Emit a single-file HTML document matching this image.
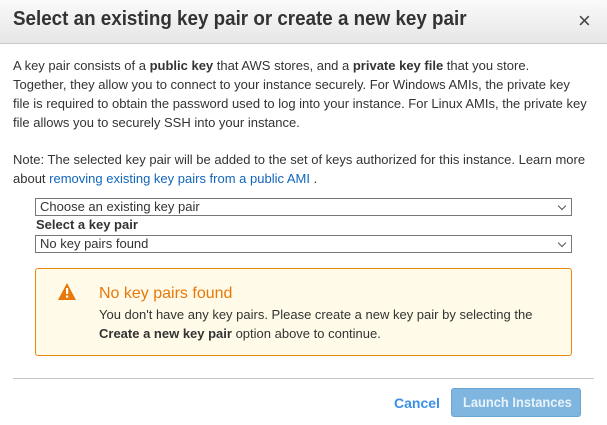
<!DOCTYPE html>
<html><head><style>
*{margin:0;padding:0;box-sizing:border-box}
body{width:607px;height:425px;background:#fff;font-family:"Liberation Sans",Arial,sans-serif;color:#333;position:relative;overflow:hidden;font-size:13px}
.hdr{position:absolute;left:0;top:0;width:607px;height:44px;background:linear-gradient(#fafafa,#e6e6e6);border-bottom:1px solid #c9c9c9}
.hdr h1{position:absolute;left:13px;top:8px;font-size:20px;font-weight:bold;color:#333;white-space:nowrap;transform:scaleX(0.94);transform-origin:left}
.x{position:absolute;left:578px;top:8px;font-size:22px;color:#444}
.s{white-space:nowrap}
p{position:absolute;left:13px;line-height:19px}
a{color:#1166bb;text-decoration:none}
.sel{position:absolute;left:35px;width:537px;height:18px;border:1px solid #777;font-size:13px;line-height:16px;padding-left:4px}
.sel:after{content:"";position:absolute;right:6px;top:4px;width:5px;height:5px;border-right:1px solid #555;border-bottom:1px solid #555;transform:rotate(45deg)}
.warn{position:absolute;left:35px;top:268px;width:537px;height:88px;background:#fffbe8;border:1px solid #e8890e;border-radius:3px}
.warn .t{position:absolute;left:63px;top:16px;font-size:16px;color:#e8780a}
.warn .d{position:absolute;left:63px;top:36px;line-height:19px;font-size:13px}
.hr{position:absolute;left:13px;top:378px;width:581px;height:1px;background:#c8c8c8}
.cancel{position:absolute;left:394px;top:395px;font-weight:bold;color:#3a8ee6;font-size:14px}
.btn{position:absolute;left:451px;top:388px;width:130px;height:29px;background:#7fb6df;border:1px solid #6aa6d4;border-radius:3px;color:#e8f2fa;font-weight:bold;font-size:14px;line-height:27px;overflow:hidden}
.btn span{position:absolute;left:11px;white-space:nowrap;transform:scaleX(0.92);transform-origin:left}
</style></head><body>
<div class="hdr"><h1>Select an existing key pair or create a new key pair</h1><div class="x">×</div></div>
<p class="s" style="top:56px">A key pair consists of a <b>public key</b> that AWS stores, and a <b>private key file</b> that you store.<br>Together, they allow you to connect to your instance securely. For Windows AMIs, the private key<br>file is required to obtain the password used to log into your instance. For Linux AMIs, the private key<br>file allows you to securely SSH into your instance.</p>
<p class="s" style="top:150px">Note: The selected key pair will be added to the set of keys authorized for this instance. Learn more<br>about <a>removing existing key pairs from a public AMI</a> .</p>
<div class="sel" style="top:198px"><div class="s">Choose an existing key pair</div></div>
<div class="s" style="position:absolute;left:36px;top:217px;font-weight:bold;font-size:13px">Select a key pair</div>
<div class="sel" style="top:235px"><div class="s">No key pairs found</div></div>
<div class="warn">
<svg style="position:absolute;left:22px;top:14px" width="18" height="17" viewBox="0 0 18 17"><path d="M9 0 L18 17 L0 17Z" fill="#e8780a"/><rect x="8" y="5" width="2.2" height="6" fill="#fff"/><rect x="8" y="12.5" width="2.2" height="2.2" fill="#fff"/></svg>
<div class="t s">No key pairs found</div>
<div class="d s">You don't have any key pairs. Please create a new key pair by selecting the<br><b>Create a new key pair</b> option above to continue.</div>
</div>
<div class="hr"></div>
<div class="cancel">Cancel</div>
<div class="btn"><span>Launch Instances</span></div>
</body></html>
